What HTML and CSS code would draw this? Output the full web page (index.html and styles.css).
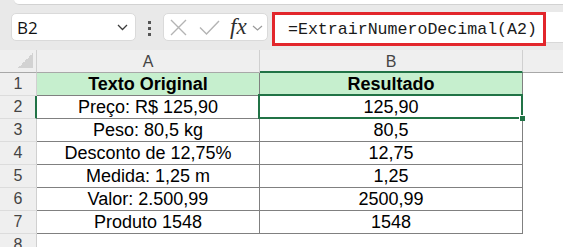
FILE: index.html
```html
<!DOCTYPE html>
<html lang="pt">
<head>
<meta charset="utf-8">
<title>Excel</title>
<link rel="stylesheet" href="styles.css">
</head>
<body>
<div class="app">
  <div class="toolbar">
    <div class="ribbon-edge"></div>
    <div class="fbar">
      <div class="namebox">
        <span class="ref">B2</span>
        <svg class="chev" width="11" height="7" viewBox="0 0 11 7"><path d="M1 1 L5.5 5.5 L10 1" fill="none" stroke="#3c3c3c" stroke-width="1.3"/></svg>
      </div>
      <div class="dots"><i></i><i></i><i></i></div>
      <div class="fxbox">
        <svg class="ico-x" width="17" height="17" viewBox="0 0 17 17"><path d="M1 1 L16 16 M16 1 L1 16" stroke="#b4b4b4" stroke-width="1.4" fill="none"/></svg>
        <svg class="ico-ok" width="21" height="15" viewBox="0 0 21 15"><path d="M1 7.5 L7.5 14 L20 1" stroke="#b4b4b4" stroke-width="1.4" fill="none"/></svg>
        <span class="fx">fx</span>
        <svg class="chev2" width="11" height="6" viewBox="0 0 11 6"><path d="M1 1 L5.5 5 L10 1" fill="none" stroke="#9a9a9a" stroke-width="1.2"/></svg>
      </div>
      <div class="formula">
        <div class="formula-hl">=ExtrairNumeroDecimal(A2)</div>
      </div>
    </div>
  </div>
  <div class="sheet">
    <div class="corner"></div>
    <div class="colh">A</div>
    <div class="colh sel">B</div>
    <div class="colh last"></div>

    <div class="rowh">1</div>
    <div class="cell head">Texto Original</div>
    <div class="cell head">Resultado</div>
    <div class="blank"></div>

    <div class="rowh sel">2</div>
    <div class="cell">Preço: R$ 125,90</div>
    <div class="cell active">125,90<span class="selbox"><span class="handle"></span></span></div>
    <div class="blank"></div>

    <div class="rowh">3</div>
    <div class="cell">Peso: 80,5 kg</div>
    <div class="cell">80,5</div>
    <div class="blank"></div>

    <div class="rowh">4</div>
    <div class="cell">Desconto de 12,75%</div>
    <div class="cell">12,75</div>
    <div class="blank"></div>

    <div class="rowh">5</div>
    <div class="cell">Medida: 1,25 m</div>
    <div class="cell">1,25</div>
    <div class="blank"></div>

    <div class="rowh">6</div>
    <div class="cell">Valor: 2.500,99</div>
    <div class="cell">2500,99</div>
    <div class="blank"></div>

    <div class="rowh">7</div>
    <div class="cell">Produto 1548</div>
    <div class="cell">1548</div>
    <div class="blank"></div>

    <div class="rowh">8</div>
    <div class="blank"></div>
    <div class="blank"></div>
    <div class="blank"></div>
  </div>
</div>
</body>
</html>
```

FILE: styles.css
```css
html, body {
  margin: 0;
  padding: 0;
  overflow: hidden;
  background: #e9e9e9;
}

.app {
  width: 563px;
  height: 247px;
  overflow: hidden;
  display: flex;
  flex-direction: column;
}

.toolbar {
  height: 50px;
  flex: 0 0 50px;
  background: #e9e9e9;
  display: flex;
  flex-direction: column;
}

.ribbon-edge {
  height: 4px;
  margin-left: 14px;
  background: #ffffff;
  border-bottom: 1px solid #d2d2d2;
  border-bottom-left-radius: 6px;
}

.fbar {
  margin-top: 7px;
  display: flex;
  align-items: flex-start;
  height: 34px;
}

.namebox {
  box-sizing: border-box;
  margin-left: 11px;
  margin-top: 1px;
  width: 125px;
  height: 28px;
  background: #fff;
  border: 1px solid #dadada;
  border-radius: 5px;
  display: flex;
  align-items: center;
  padding: 0 7px 0 5px;
}

.ref {
  flex: 1;
  font-family: "Open Sans", "Noto Sans", sans-serif;
  font-size: 17px;
  color: #111;
  line-height: 1;
}

.chev {
  display: block;
}

.dots {
  margin-left: 12px;
  margin-top: 9px;
  width: 3px;
  display: flex;
  flex-direction: column;
  gap: 3px;
}

.dots i {
  display: block;
  width: 3px;
  height: 3px;
  background: #555;
}

.fxbox {
  box-sizing: border-box;
  margin-left: 12px;
  margin-top: 1px;
  width: 105px;
  height: 28px;
  background: #fff;
  border: 1px solid #dadada;
  border-radius: 5px;
  display: flex;
  align-items: center;
  padding-left: 6px;
}

.ico-x { display: block; }
.ico-ok { display: block; margin-left: 12px; }

.fx {
  margin-left: 10px;
  font-family: "Liberation Serif", "DejaVu Serif", serif;
  font-style: italic;
  font-size: 23px;
  color: #2e2e2e;
  line-height: 1;
  margin-top: -2px;
}

.chev2 {
  display: block;
  margin-left: 5px;
  margin-top: 2px;
}

.formula {
  margin-left: 4px;
  flex: 1;
  height: 30px;
  background: #fff;
  border-top-left-radius: 5px;
  border-bottom: 1px solid #d8d8d8;
}

.formula-hl {
  box-sizing: border-box;
  width: 274px;
  height: 34px;
  margin-top: 0;
  border: 3px solid #e2262b;
  background: #fff;
  padding-left: 13px;
  display: flex;
  align-items: center;
  font-family: "Liberation Mono", "DejaVu Sans Mono", monospace;
  font-size: 16.6px;
  color: #1a1a1a;
}

.sheet {
  flex: 0 0 auto;
  height: 197px;
  overflow: hidden;
  background: #fff;
  display: grid;
  grid-template-columns: 37px 223px 263px 1fr;
  grid-template-rows: repeat(9, 23px);
  font-family: "Liberation Sans", Arial, sans-serif;
}

.sheet > div {
  box-sizing: border-box;
  display: flex;
  align-items: center;
  justify-content: center;
}

.corner {
  background: #efefef linear-gradient(to top left, #d2d2d2 50%, transparent 50%) no-repeat;
  background-size: 15px 15px;
  background-position: right 3px bottom 4px;
  border-right: 1px solid #d0d0d0;
  border-bottom: 1px solid #a8a8a8;
}

.colh {
  background: #efefef;
  color: #444;
  font-size: 16px;
  border-right: 1px solid #d0d0d0;
  border-bottom: 1px solid #a8a8a8;
  padding-top: 2px;
}

.colh.sel {
  border-bottom: 2px solid #217346;
  padding-top: 3px;
}

.colh.last {
  border-right: none;
}

.rowh {
  background: #efefef;
  color: #444;
  font-size: 16px;
  border-right: 1px solid #d0d0d0;
  border-bottom: 1px solid #dcdcdc;
}

.rowh.sel {
  border-right: 2px solid #217346;
  padding-left: 1px;
}

.cell {
  font-size: 18px;
  color: #000;
  border-right: 1px solid #808080;
  border-bottom: 1px solid #808080;
}

.cell.head {
  background: #c6efce;
  font-weight: bold;
}

.cell.active {
  position: relative;
}

.selbox {
  position: absolute;
  left: -2px;
  top: -2px;
  right: -1px;
  bottom: -1px;
  border: 2px solid #217346;
}

.handle {
  position: absolute;
  right: -4px;
  bottom: -4px;
  width: 5px;
  height: 5px;
  background: #217346;
  border-left: 1px solid #fff;
  border-top: 1px solid #fff;
}

.blank {
  background: #fff;
}
```
